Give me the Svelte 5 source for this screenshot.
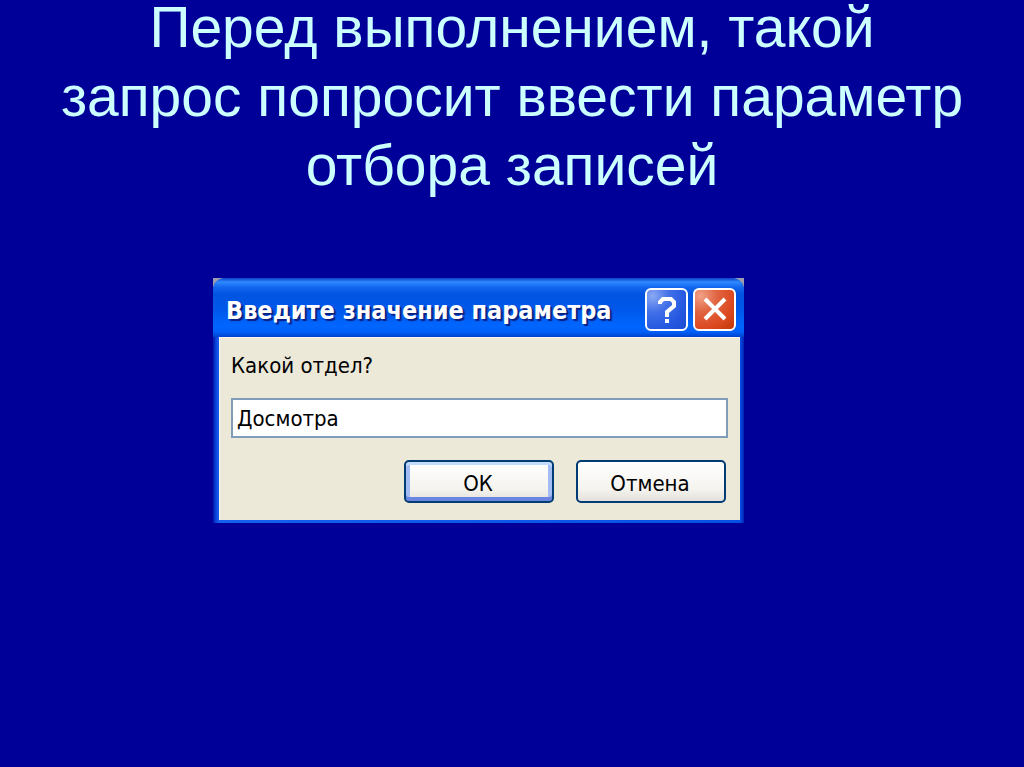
<script lang="ts">
    let value = $state("Досмотра");
    let open = $state(true);

    function close() {
        open = false;
    }

    function submit(event: SubmitEvent) {
        event.preventDefault();
        close();
    }
</script>

<main class="slide">
    <h1>Перед выполнением, такой запрос попросит ввести параметр отбора записей</h1>

    {#if open}
        <div class="stage">
            <div class="corners">
                <div class="dialog" role="dialog" aria-labelledby="dialog-title">
                    <header class="titlebar">
                        <h2 id="dialog-title">Введите значение параметра</h2>
                        <button type="button" class="caption help" aria-label="Справка">
                            <svg viewBox="0 0 39 39" aria-hidden="true">
                                <path d="M13 14V12L16 9H24L27 12V16L20 22V27" />
                                <path d="M20 29V33" />
                            </svg>
                        </button>
                        <button type="button" class="caption close" aria-label="Закрыть" onclick={close}>
                            <svg viewBox="0 0 39 39" aria-hidden="true">
                                <path d="M10 9L30 29M30 9L10 29" />
                            </svg>
                        </button>
                    </header>

                    <form class="body" onsubmit={submit}>
                        <label for="parameter">Какой отдел?</label>
                        <input id="parameter" type="text" bind:value />
                        <div class="actions">
                            <button type="submit" class="action default">ОК</button>
                            <button type="button" class="action" onclick={close}>Отмена</button>
                        </div>
                    </form>
                </div>
            </div>
        </div>
    {/if}
</main>

<style>
    :global(body) {
        margin: 0;
        background: #000099;
    }

    .slide {
        display: flow-root;
        min-height: 100vh;
        box-sizing: border-box;
        background: #000099;
    }

    /* the heading starts tight against the top edge of the slide */
    h1 {
        margin: -7px 0 0;
        padding: 0 56px;
        color: #ccffff;
        font: 400 57px/69px "Liberation Sans", Arial, sans-serif;
        text-align: center;
    }

    .stage {
        display: grid;
        grid-template-columns: 213fr 531fr 280fr;
        margin-top: 78px;
    }

    /* grey pixels that show behind the rounded top corners */
    .corners {
        grid-column: 2;
        background:
            linear-gradient(#9c9cae, #9c9cae) left top / 10px 10px no-repeat,
            linear-gradient(#9c9cae, #9c9cae) right top / 10px 10px no-repeat;
    }

    .dialog {
        padding: 0 4px 3px 6px;
        border-radius: 12px 12px 0 0;
        background: linear-gradient(90deg, #0019a8 0, #0a45dc 3px, #1660f0 6px, #0650e4 calc(100% - 4px), #0030c4 calc(100% - 1px), #001cb0);
        font-family: "DejaVu Sans Condensed", "DejaVu Sans", sans-serif;
    }

    .titlebar {
        display: flex;
        align-items: center;
        gap: 5px;
        height: 59px;
        box-sizing: border-box;
        margin: 0 -4px 0 -6px;
        padding: 4px 8px 0 13px;
        border-radius: 12px 12px 0 0;
        background: linear-gradient(#0a3fc8 0, #2f8bff 4px, #1468f0 9px, #0054e0 16px, #0058ea 32px, #0066ff 48px, #0060f8 54px, #0040cc 59px);
    }

    h2 {
        flex: 1;
        margin: 0;
        padding-top: 2px;
        color: #ffffff;
        font-size: 25px;
        font-weight: 700;
        line-height: 28px;
        white-space: nowrap;
        text-shadow: 2px 2px 1px #0a1f80;
    }

    .caption {
        flex: none;
        width: 43px;
        height: 43px;
        box-sizing: border-box;
        padding: 0;
        border: 2px solid #ffffff;
        border-radius: 6px;
    }

    .caption svg {
        display: block;
        width: 100%;
        height: 100%;
        fill: none;
        stroke: #ffffff;
        stroke-width: 4;
    }

    .help {
        background: radial-gradient(circle at 15% 15%, #8aa8f4, #4270e8 35%, #2458e0 70%, #1c4cd0);
    }

    .close {
        background: radial-gradient(circle at 15% 15%, #f0a088, #e06440 35%, #dc4820 70%, #c03808);
    }

    .body {
        display: flex;
        flex-direction: column;
        padding: 14px 12px 17px 11px;
        border: 1px solid #f8f6ec;
        border-width: 1px 0 0 1px;
        background: #ece9d8;
        color: #000000;
        font-size: 22px;
        line-height: 28px;
    }

    input {
        width: 100%;
        height: 40px;
        box-sizing: border-box;
        margin: 18px 0 22px;
        padding: 0 4px;
        border: 2px solid #7f9db9;
        border-radius: 0;
        outline: none;
        background: #ffffff;
        color: inherit;
        font: inherit;
    }

    .actions {
        display: flex;
        justify-content: flex-end;
        gap: 22px;
        padding-right: 2px;
    }

    .action {
        width: 150px;
        height: 43px;
        padding: 4px 2px 0 0;
        border: 2px solid #003c74;
        border-radius: 5px;
        background: linear-gradient(#ffffff, #f4f3ee 70%, #e4e1dc);
        color: inherit;
        font: inherit;
    }

    .default {
        box-shadow:
            inset 0 3px #c4dcfc,
            inset 0 -4px #6a86e0,
            inset 4px 0 #a4bcf4,
            inset -4px 0 #a4bcf4;
    }
</style>
